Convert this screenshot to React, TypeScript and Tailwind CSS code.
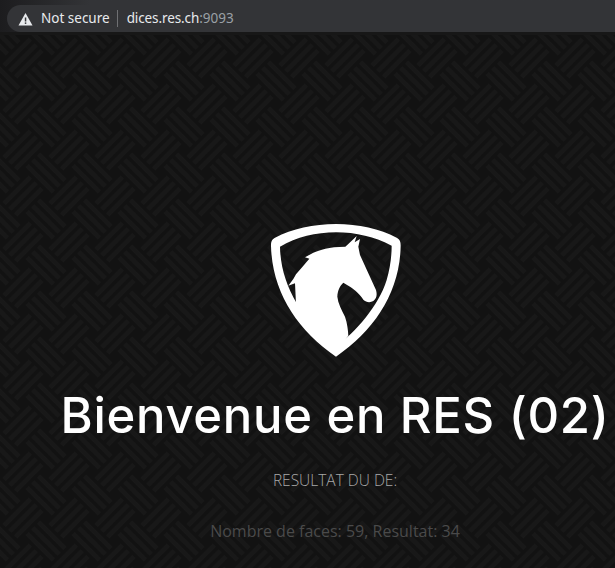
// diagonal weave: one diamond of "/" stripes and one of "\" stripes per tile
const TILE = 46;
const lines: number[][] = [];
for (const o of [-5.75, 0, 5.75]) {
  lines.push([11.5 + o, 34.5 + o, 34.5 + o, 11.5 + o]);
  for (const [dx, dy] of [[0, 0], [46, 0], [0, 46], [46, 46]]) {
    lines.push([-11.5 + o + dx, -11.5 - o + dy, 11.5 + o + dx, 11.5 - o + dy]);
  }
}
const weave = lines.map((l) => `M${l[0]} ${l[1]}L${l[2]} ${l[3]}`).join("");

export default function App() {
  return (
    <div className="w-[615px] h-[568px] overflow-hidden bg-[#121212] flex flex-col" style={{ fontFamily: '"Open Sans", sans-serif' }}>
      {/* browser address bar */}
      <div className="h-[32px] shrink-0 bg-gradient-to-r from-[#1c1c1e] to-[#333437] to-[90px] flex items-end pl-[7px] relative z-10">
        <div className="flex items-center h-[27px] w-full rounded-l-full bg-[#333437] pl-[11px] text-[13.5px]" style={{ fontFamily: '"Noto Sans", sans-serif' }}>
          <svg width="15" height="14" viewBox="0 0 15 14" className="mr-[8px]">
            <path d="M7.5 1 14.5 13.5H.5Z" fill="#e8eaed" />
            <rect x="6.8" y="5.5" width="1.5" height="4" fill="#333437" />
            <rect x="6.8" y="10.4" width="1.5" height="1.5" fill="#333437" />
          </svg>
          <span className="text-[#e8eaed]">Not secure</span>
          <span className="w-px h-[17px] bg-[#6f7073] ml-[7px] mr-[9px]" />
          <span className="text-[#e8eaed] tracking-[-0.1px]">dices.res.ch</span>
          <span className="text-[#9aa0a6]">:9093</span>
        </div>
      </div>
      <div className="h-[3px] shrink-0 bg-[#171717] relative z-10" />

      <div className="relative flex-1">
        <svg className="absolute inset-0 w-full h-full" aria-hidden="true">
          <defs>
            <pattern id="maze" width={TILE} height={TILE} patternUnits="userSpaceOnUse">
              <path d={weave} stroke="#181818" strokeWidth="4.5" strokeLinecap="square" fill="none" />
            </pattern>
          </defs>
          <rect width="100%" height="100%" fill="url(#maze)" />
        </svg>

        <div className="relative w-[670px] flex flex-col items-center pt-[190px]">
          <svg width="150" height="150" viewBox="0 0 450 450" className="-mt-[10px] mb-[21px]">
            <path
              fillRule="evenodd"
              fill="#ffffff"
              d="M228 27C295 27 360 42 410 68C420 74 422 80 422 92C420 230 345 345 228 425C111 345 36 230 33 92C33 80 35 74 45 68C96 42 161 27 228 27ZM228 52C168 52 110 66 60 95C62 205 120 310 228 395C287 350 355 275 380 195C390 160 395 125 395 92C345 66 288 52 228 52Z"
            />
            <path
              fill="#ffffff"
              d="M256 95L272 80L290 63L284 82L300 72L295 95L300 120L325 175L348 225C352 240 350 250 340 258C330 264 318 262 310 254C302 240 285 225 270 215L250 203C240 212 233 225 232 245C234 265 245 285 255 305C262 325 264 345 265 362L228 410L95 275L108 268L105 205L85 212L100 192L108 178L125 158L148 131L135 127L160 113C180 105 205 95 256 95Z"
            />
          </svg>
          <h1 className="text-[49px] leading-[60px] tracking-[0.7px] font-medium text-white whitespace-nowrap mb-[24px]" style={{ fontFamily: "Inter, sans-serif" }}>
            Bienvenue en RES (02)
          </h1>
          <p className="text-[15.5px] leading-[20px] font-light text-[#a8a8a8] mb-[29px]">RESULTAT DU DE:</p>
          <p className="text-[16px] leading-[24px] text-[#4a4a4a]">Nombre de faces: 59, Resultat: 34</p>
        </div>
      </div>
    </div>
  );
}
